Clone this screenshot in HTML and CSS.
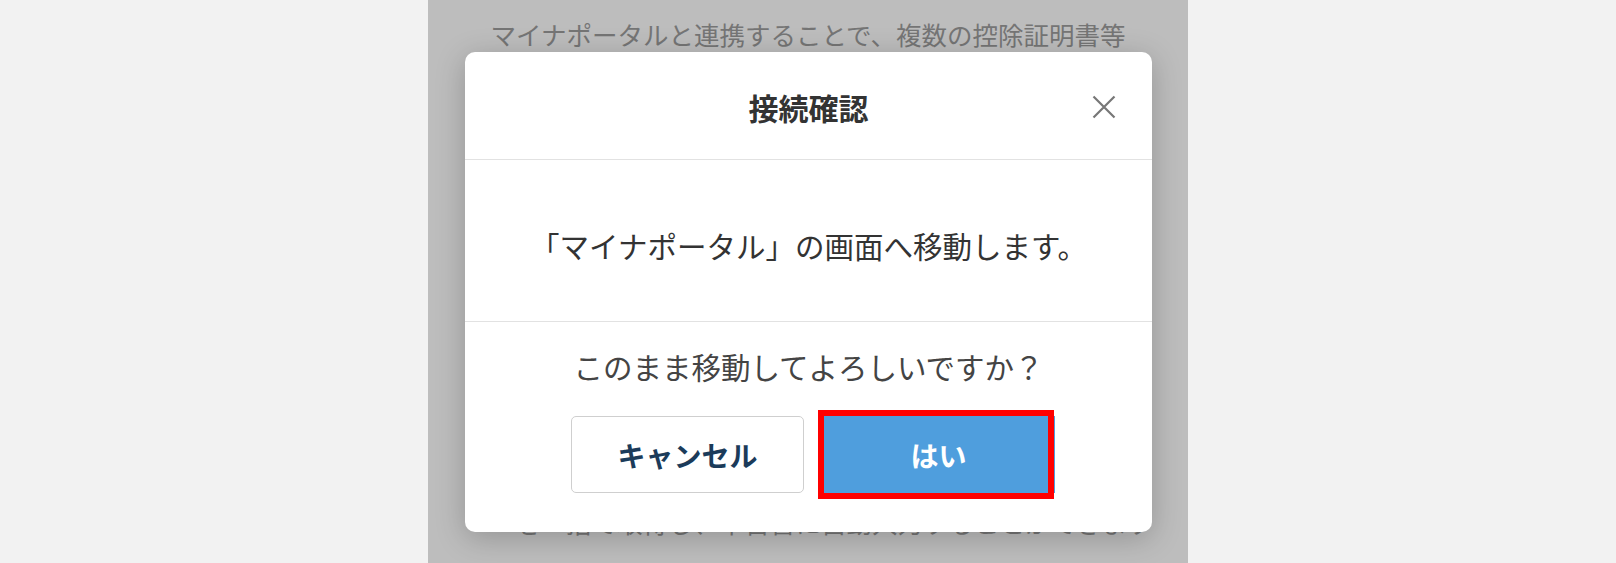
FILE: index.html
```html
<!DOCTYPE html>
<html lang="ja">

<head>
  <meta charset="utf-8">
  <title>接続確認</title>
  <meta name="viewport" content="width=device-width, initial-scale=1">
  <link rel="stylesheet" href="styles.css">
</head>

<body>
  <div class="screen">
    <div class="page">
      <p class="bg-text">マイナポータルと連携することで、複数の控除証明書等</p>
      <p class="bg-text bg-text-low">を一括で取得し、申告書に自動入力することができます</p>

      <div class="modal">
        <div class="modal-header">
          <span></span>
          <h2 class="modal-title">接続確認</h2>
          <button class="close-btn" type="button" aria-label="閉じる">
            <svg width="24" height="24" viewBox="0 0 24 24">
              <path d="M1.5 1.5 L22.5 22.5 M22.5 1.5 L1.5 22.5" stroke="#777" stroke-width="2.2" fill="none"/>
            </svg>
          </button>
        </div>

        <div class="modal-body">
          <p>「マイナポータル」の画面へ移動します。</p>
        </div>

        <div class="modal-footer">
          <p class="question">このまま移動してよろしいですか？</p>
          <div class="actions">
            <button class="btn btn-cancel" type="button">キャンセル</button>
            <div class="highlight">
              <button class="btn btn-ok" type="button">はい</button>
            </div>
          </div>
        </div>
      </div>
    </div>
  </div>
</body>

</html>
```

FILE: styles.css
```css
* {
  padding: 0px;
  margin: 0px;
  box-sizing: border-box;
}

body {
  background-color: #f2f2f2;
  font-family: "Noto Sans CJK JP", "Noto Sans", sans-serif;
  color: #333;
}

.screen {
  display: flex;
  justify-content: center;
  height: 563px;
  overflow: hidden;
}

.page {
  position: relative;
  width: 760px;
  height: 563px;
  background-color: #bdbdbd;
}

.bg-text {
  font-size: 25.5px;
  line-height: 36px;
  color: #757575;
  text-align: center;
  margin-top: 16px;
}

.bg-text-low {
  text-align: left;
  padding-left: 87px;
  margin-top: 452px;
  white-space: nowrap;
}

.modal {
  position: absolute;
  top: 52px;
  left: 37px;
  width: 687px;
  height: 480px;
  background-color: #fff;
  border-radius: 10px;
  box-shadow: 0 6px 30px rgba(0, 0, 0, 0.22);
}

.modal-header {
  display: grid;
  grid-template-columns: 1fr auto 1fr;
  align-items: center;
  height: 108px;
  padding-top: 2px;
  border-bottom: 1px solid #e2e2e2;
}

.modal-title {
  font-size: 30px;
  font-weight: 700;
  color: #333;
  line-height: 40px;
}

.close-btn {
  justify-self: end;
  margin-right: 36px;
  border: none;
  background: none;
  width: 24px;
  height: 24px;
  cursor: pointer;
}

.close-btn svg {
  display: block;
}

.modal-body {
  display: flex;
  align-items: center;
  justify-content: center;
  height: 162px;
  padding-top: 8px;
  border-bottom: 1px solid #e2e2e2;
  font-size: 29.5px;
  line-height: 40px;
  color: #333;
}

.modal-footer {
  padding-top: 24px;
  text-align: center;
}

.question {
  font-size: 29.5px;
  line-height: 40px;
  color: #444;
}

.actions {
  display: flex;
  justify-content: center;
  gap: 18px;
  margin-top: 30px;
  padding-left: 9px;
}

.btn {
  width: 233px;
  height: 77px;
  font-family: "Noto Sans CJK JP", sans-serif;
  font-size: 28px;
  font-weight: 700;
  border-radius: 5px;
  cursor: pointer;
}

.btn-cancel {
  background-color: #fff;
  border: 1px solid #cfcfcf;
  color: #1b3b5a;
}

.btn-ok {
  display: block;
  background-color: #4f9edd;
  border: none;
  border-radius: 0;
  color: #fff;
}

.highlight {
  position: relative;
}

.highlight::after {
  content: "";
  position: absolute;
  top: -6px;
  bottom: -6px;
  left: -4px;
  right: 1px;
  border: 6px solid #ff0000;
  pointer-events: none;
}
```
